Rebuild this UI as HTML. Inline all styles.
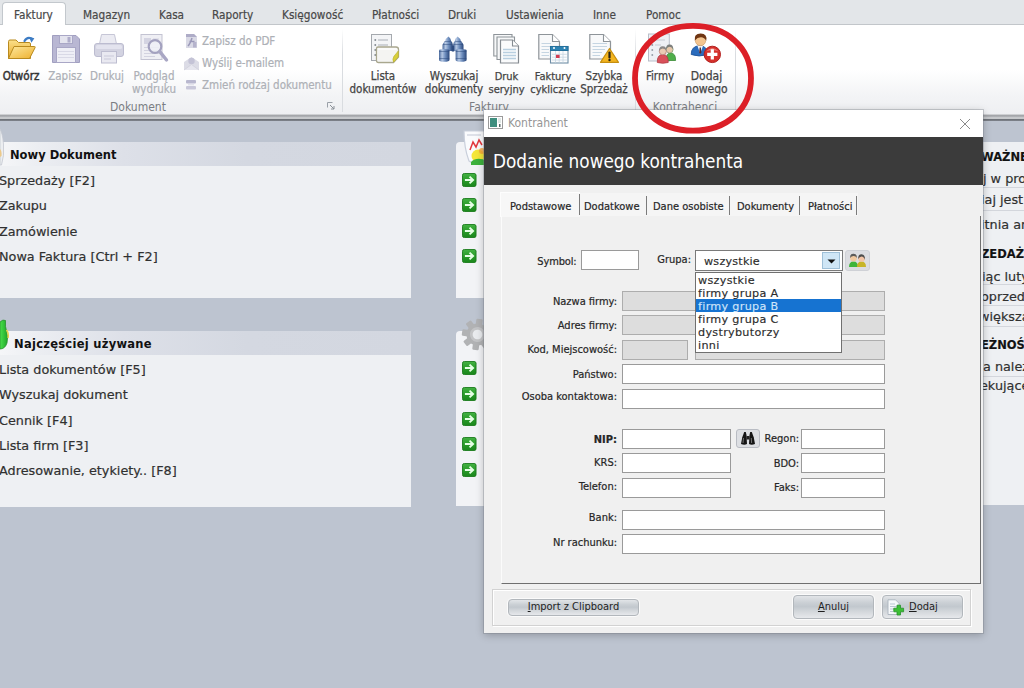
<!DOCTYPE html>
<html lang="pl">
<head>
<meta charset="utf-8">
<title>Kontrahent</title>
<style>
*{box-sizing:border-box;margin:0;padding:0}
html,body{width:1024px;height:688px;overflow:hidden}
body{position:relative;background:#bdc4d0;font-family:"DejaVu Sans","Liberation Sans",sans-serif;color:#222}
.abs{position:absolute}
/* ---------- ribbon ---------- */
#tabbar{position:absolute;left:0;top:0;width:1024px;height:25px;background:#e3e6e9;border-bottom:1px solid #c2c6ca}
.rtab{position:absolute;top:7.5px;font:11.7px/14px "DejaVu Sans Condensed","Liberation Sans",sans-serif;color:#484848;-webkit-text-stroke:.2px #484848;white-space:nowrap}
#acttab{position:absolute;left:2px;top:2px;width:64px;height:24px;background:#fff;border:1px solid #c3c8cd;border-bottom:none;border-radius:4px 4px 0 0}
#ribbon{position:absolute;left:0;top:25px;width:1024px;height:89px;background:linear-gradient(#fff 0,#fff 45px,#f3f4f6 70px,#eeeff2 89px)}
#ribline{position:absolute;left:0;top:114px;width:1024px;height:7px;background:linear-gradient(#e3e4e7 0,#a4a6aa 1.500px,#a4a6aa 2.300px,#c6c8cb 3px,#c6c8cb 4.800px,#6f737a 5.500px,#6f737a 6.400px,#b4bac6 7px)}
.gsep{position:absolute;top:29px;width:1px;height:83px;background:linear-gradient(#fff,#d9dce0 30%,#d9dce0)}
.glabel{position:absolute;top:99.500px;font:12px/14px "DejaVu Sans Condensed","Liberation Sans",sans-serif;color:#7a7d82;white-space:nowrap;text-align:center}
.blabel{position:absolute;font:11.5px/13px "DejaVu Sans Condensed","Liberation Sans",sans-serif;color:#444;-webkit-text-stroke:.25px #444;text-align:center;white-space:nowrap}
.blabel.dis{color:#adb0b6;-webkit-text-stroke:.2px #adb0b6}
.slabel{position:absolute;font:11.5px/13px "DejaVu Sans Condensed","Liberation Sans",sans-serif;color:#adb0b6;-webkit-text-stroke:.2px #adb0b6;white-space:nowrap}
/* ---------- panels ---------- */
.panel{position:absolute;background:#eef0f3}
.phead{position:absolute;left:0;top:0;right:0;height:24px;background:linear-gradient(90deg,#f5f6f8 0,#eceef2 9%,#dde0e8 30%,#d4d8e1 60%,#d3d7e0 100%)}
.ptitle{position:absolute;top:6px;font:bold 11.5px/14px "DejaVu Sans","Liberation Sans",sans-serif;color:#111;white-space:nowrap}
.pitem{position:absolute;left:-1px;font:12.8px/16px "DejaVu Sans","Liberation Sans",sans-serif;color:#303030;white-space:nowrap;-webkit-text-stroke:.2px #303030}
.garrow{position:absolute;left:462px;width:14.500px;height:14px}
/* ---------- dialog ---------- */
#dlg{position:absolute;left:484px;top:110px;width:499px;height:523px;background:#f0f0f0;box-shadow:0 0 0 1px rgba(120,125,135,.35),0 2px 8px rgba(0,0,0,.25)}
#dtitle{position:absolute;left:0;top:0;width:100%;height:27px;background:#fff}
#dhead{position:absolute;left:0;top:27px;width:100%;height:48px;background:#3b3b3b}
#dhead span{position:absolute;left:9px;top:13px;font:18.800px/24px "DejaVu Sans Condensed","Liberation Sans",sans-serif;color:#fff;white-space:nowrap}
.dl{position:absolute;font:11px/14px "DejaVu Sans Condensed","Liberation Sans",sans-serif;color:#262626;-webkit-text-stroke:.2px #262626;white-space:nowrap;text-align:right}
.inp{position:absolute;height:20px;background:#fff;border:1px solid #9a9a9a}
.inp.g{background:#dddddd;border-color:#adadad}
.btn{position:absolute;border:1px solid #b2b7bc;border-radius:4px;box-shadow:0 0 0 1px rgba(255,255,255,.7);background:linear-gradient(#e2e5e8 0,#cbd0d5 30%,#c2c8ce 48%,#d3d7db 70%,#e6e8eb 100%);font:11px/14px "DejaVu Sans Condensed","Liberation Sans",sans-serif;color:#1e1e1e;text-align:center}

.tb{font-size:11px}
.tsep{position:absolute;top:86px;width:1px;height:19px;background:#7b7b7b}
#ddl{position:absolute;left:211px;top:161.500px;width:147px;height:81px;background:#fff;border:1px solid #707070;font:11.2px/13px "DejaVu Sans","Liberation Sans",sans-serif;letter-spacing:.3px;color:#2c2c2c;-webkit-text-stroke:.15px #2c2c2c}
#ddl div{height:13px;line-height:15px;padding-left:2px;white-space:nowrap}
#ddl .sel{background:#1673d1;color:#cfe4fa;-webkit-text-stroke:.15px #cfe4fa}

.rt{position:absolute;font:12.800px/16px "DejaVu Sans","Liberation Sans",sans-serif;color:#303030;-webkit-text-stroke:.2px #303030;white-space:nowrap}
.rt.b{font-weight:bold;font-size:11.5px;color:#111}
.rl{position:absolute;left:0;width:60px;height:1px;background:#d3d6dc}
</style>
</head>
<body>

<!-- ======= RIBBON ======= -->
<div id="tabbar"></div>
<div id="acttab"></div>
<span class="rtab" style="left:14px">Faktury</span>
<span class="rtab" style="left:83px">Magazyn</span>
<span class="rtab" style="left:159px">Kasa</span>
<span class="rtab" style="left:212px">Raporty</span>
<span class="rtab" style="left:282px">Księgowość</span>
<span class="rtab" style="left:372px">Płatności</span>
<span class="rtab" style="left:448px">Druki</span>
<span class="rtab" style="left:506px">Ustawienia</span>
<span class="rtab" style="left:593px">Inne</span>
<span class="rtab" style="left:646px">Pomoc</span>
<div id="ribbon"></div>
<div id="ribline"></div>
<div class="gsep" style="left:342px"></div>
<div class="gsep" style="left:635px"></div>
<div class="gsep" style="left:735px"></div>

<span class="glabel" style="left:98px;width:80px">Dokument</span>
<span class="glabel" style="left:449px;width:80px">Faktury</span>
<span class="glabel" style="left:645px;width:80px">Kontrahenci</span>

<span class="blabel" style="left:-9px;width:60px;top:70px;color:#333;-webkit-text-stroke:.45px #333">Otwórz</span>
<span class="blabel dis" style="left:35px;width:60px;top:70px">Zapisz</span>
<span class="blabel dis" style="left:77px;width:60px;top:70px">Drukuj</span>
<span class="blabel dis" style="left:124px;width:60px;top:70px">Podgląd<br>wydruku</span>
<span class="slabel" style="left:202px;top:35px">Zapisz do PDF</span>
<span class="slabel" style="left:202px;top:57px">Wyślij e-mailem</span>
<span class="slabel" style="left:202px;top:79px">Zmień rodzaj dokumentu</span>

<span class="blabel" style="left:343px;width:80px;top:70px">Lista<br>dokumentów</span>
<span class="blabel" style="left:414px;width:80px;top:70px">Wyszukaj<br>dokumenty</span>
<span class="blabel" style="left:466.500px;width:80px;top:70px;font-size:11px">Druk<br>seryjny</span>
<span class="blabel" style="left:513px;width:80px;top:70px;font-size:11px">Faktury<br>cykliczne</span>
<span class="blabel" style="left:564px;width:80px;top:70px">Szybka<br>Sprzedaż</span>
<span class="blabel" style="left:620px;width:80px;top:70px">Firmy</span>
<span class="blabel" style="left:666.500px;width:80px;top:70px;font-size:12px">Dodaj<br>nowego</span>


<!-- ======= RIBBON ICONS ======= -->
<!-- open folder -->
<svg class="abs" style="left:6px;top:34px" width="32" height="28" viewBox="0 0 32 28">
  <defs><linearGradient id="fo1" x1="0" y1="0" x2="0" y2="1"><stop offset="0" stop-color="#fbe08a"/><stop offset="1" stop-color="#e9a92a"/></linearGradient>
  <linearGradient id="fo2" x1="0" y1="0" x2="1" y2="1"><stop offset="0" stop-color="#fde9a0"/><stop offset="1" stop-color="#eeb02c"/></linearGradient></defs>
  <path d="M2.5 7.5 Q2.5 6 4 6 H10 L12.5 8.5 H23 Q24.5 8.5 24.5 10 V24.5 H2.5 Z" fill="url(#fo1)" stroke="#b98a1e" stroke-width="1"/>
  <path d="M8 12.5 H28.5 Q29.6 12.5 29 13.8 L23.5 24.5 H2.5 Z" fill="url(#fo2)" stroke="#b98a1e" stroke-width="1"/>
  <path d="M18.5 7 Q21 2.5 25.5 4.5" fill="none" stroke="#3d7cc4" stroke-width="2.2" stroke-linecap="round"/>
  <path d="M23.2 3 L28.4 4.2 L25.4 8.8 Z" fill="#3d7cc4"/>
</svg>
<!-- floppy -->
<svg class="abs" style="left:51px;top:34px" width="30" height="30" viewBox="0 0 30 30">
  <path d="M1.5 1.5 H25 L28.5 5 V28.5 H1.5 Z" fill="#b9b7d3" stroke="#a19fc0"/>
  <rect x="8.5" y="1.5" width="13" height="8" fill="#e4e4ee" stroke="#a9a7c6"/>
  <rect x="16.5" y="3" width="3" height="5.5" fill="#aeacc9"/>
  <rect x="5.5" y="13.5" width="19" height="15" fill="#efeff6" stroke="#a9a7c6"/>
  <path d="M7 17.5 H23 M7 20.5 H23 M7 23.5 H23" stroke="#d9d9e6" stroke-width="1"/>
</svg>
<!-- printer -->
<svg class="abs" style="left:93px;top:32px" width="32" height="33" viewBox="0 0 32 33">
  <path d="M8.5 2.5 H21.5 L23.5 12 H6.5 Z" fill="#ebebf2" stroke="#c6c6d6"/>
  <rect x="1.5" y="11.5" width="29" height="13" rx="2.5" fill="#d3d3e1" stroke="#bcbcd0"/>
  <rect x="3" y="13" width="26" height="4" rx="1.5" fill="#e3e3ee"/>
  <rect x="8.5" y="19.5" width="15" height="11.5" fill="#e9e9f1" stroke="#bdbdd0"/>
  <path d="M11 24 H21 M11 27 H18" stroke="#c9c9da" stroke-width="1.2"/>
</svg>
<!-- preview -->
<svg class="abs" style="left:139px;top:32px" width="32" height="32" viewBox="0 0 32 32">
  <rect x="2" y="2.5" width="21" height="25" fill="#efeff4" stroke="#c3c3d2"/>
  <rect x="5" y="6" width="7" height="6" fill="#d4d4e2"/>
  <path d="M14 7 H20 M14 10 H20 M5 15.5 H20 M5 18.5 H20 M5 21.5 H20 M5 24.5 H16" stroke="#d3d3e0" stroke-width="1.2"/>
  <circle cx="16" cy="14.5" r="6.3" fill="#eef0f6" fill-opacity=".85" stroke="#a3a1bf" stroke-width="2.2"/>
  <path d="M20.8 19.6 L27.5 28" stroke="#a9a7c4" stroke-width="3.4" stroke-linecap="round"/>
</svg>
<!-- small icons -->
<svg class="abs" style="left:185px;top:33px" width="13" height="16" viewBox="0 0 13 16">
  <path d="M1 1 H9 L12 4 V15 H1 Z" fill="#d9d9e5"/><path d="M1 1 H9 L12 4 H1 Z" fill="#aeacc7"/>
  <path d="M3 13 C5 11 6 8 7 5 M4.5 8.5 H9.5" stroke="#9a98b8" stroke-width="1.5" fill="none"/>
  <rect x="8" y="9" width="3.5" height="5.5" fill="#b5b3cc"/>
</svg>
<svg class="abs" style="left:183px;top:56px" width="17" height="15" viewBox="0 0 17 15">
  <path d="M1 6 L8.5 1 L16 6 V14 H1 Z" fill="#dcdce6"/>
  <circle cx="8.5" cy="5" r="3.2" fill="#c4c3d6"/>
  <path d="M1 14 L8.5 8.5 L16 14" fill="#e6e6ee" stroke="#d0d0dc" stroke-width=".8"/>
</svg>
<svg class="abs" style="left:185px;top:79px" width="12" height="12" viewBox="0 0 12 12">
  <rect x="1" y="1" width="10" height="3.6" rx="1" fill="#b9b8cf"/>
  <rect x="1" y="7" width="10" height="3.6" rx="1" fill="#c9c8da"/>
  <path d="M3 5.8 H9" stroke="#dadae6" stroke-width="1"/>
</svg>

<!-- lista dokumentow -->
<svg class="abs" style="left:369px;top:32px" width="32" height="33" viewBox="0 0 32 33">
  <rect x="2.5" y="2.5" width="20" height="26" fill="#f4f5f7" stroke="#a5a9ae"/>
  <path d="M9 8 H19 M9 13 H19 M9 18 H12" stroke="#aab0b8" stroke-width="1.2"/>
  <path d="M5.5 8 h1.6 M5.5 13 h1.6 M5.5 18 h1.6 M5.5 23 h1.6" stroke="#6e757d" stroke-width="1.6"/>
  <path d="M7.5 16.5 Q7.5 15 9 15 H27 Q29.5 15 29.5 17.5 V25 L24.5 30.5 H9.5 Q7.5 30.5 7.5 28.5 Z" fill="#fbfbfa" stroke="#a9a78e" stroke-width="1.3"/>
  <path d="M9 18 H28 V24.5 L24 29 H9 Z" fill="#f4f4f2"/>
  <path d="M29.3 19 V25 L24.6 30.2 Q23 27 25 24.2 Z" fill="#d8cf3a" stroke="#b7ae28" stroke-width=".6"/>
</svg>
<!-- binoculars -->
<svg class="abs" style="left:438px;top:34px" width="30" height="29" viewBox="0 0 30 29">
  <defs><linearGradient id="bn" x1="0" y1="0" x2="1" y2="0"><stop offset="0" stop-color="#48689b"/><stop offset=".3" stop-color="#b4c7e3"/><stop offset=".6" stop-color="#6d8dbd"/><stop offset="1" stop-color="#294679"/></linearGradient></defs>
  <path d="M10.500 2.500 Q12.800 4 13.200 7 Q14.800 8.500 14.800 11 V17 H4.500 V11 Q5 8.500 7 7.500 Q7.800 4 10.500 2.500Z" fill="url(#bn)"/>
  <path d="M19.500 2.500 Q17.200 4 16.800 7 Q15.200 8.500 15.200 11 V17 H25.500 V11 Q25 8.500 23 7.500 Q22.200 4 19.500 2.500Z" fill="url(#bn)"/>
  <rect x="13.800" y="11.500" width="2.400" height="6" fill="#2f4d80"/>
  <path d="M1 16.500 Q1 15 6.200 15 Q11.500 15 11.500 16.500 V26 Q11.500 27.800 6.200 27.800 Q1 27.800 1 26 Z" fill="url(#bn)"/>
  <path d="M17.600 16.500 Q17.600 15 23 15 Q28.600 15 28.600 16.500 V26 Q28.600 27.800 23 27.800 Q17.600 27.800 17.600 26 Z" fill="url(#bn)"/>
  <path d="M6.300 7.500 H12.700 M17.300 7.500 H23.700 M4.800 10.500 H14.600 M15.400 10.500 H25.200 M1.200 17.500 H11.300 M17.800 17.500 H28.400 M1.200 24.500 H11.300 M17.800 24.500 H28.400" stroke="#2b4a7c" stroke-width=".9" opacity=".55"/>
</svg>
<!-- druk seryjny -->
<svg class="abs" style="left:492px;top:32px" width="30" height="33" viewBox="0 0 30 33">
  <path d="M1.800 2.500 H20 V24 H1.800 Z" fill="#f7f8f9" stroke="#8e9499" stroke-width="1.100"/>
  <path d="M5 5 H22.500 V27.500 H5 Z" fill="#f7f8f9" stroke="#8e9499" stroke-width="1.100"/>
  <path d="M8.500 8 H20.500 L26.500 14 V31 H8.500 Z" fill="#fafbfc" stroke="#868c92" stroke-width="1.200"/>
  <path d="M20.500 8 V14 H26.500" fill="#fff" stroke="#868c92" stroke-width="1.100"/>
  <path d="M11 17.500 H24 M11 20.500 H24 M11 23.500 H24 M11 26.500 H24" stroke="#b8cfe0" stroke-width="1.300"/>
</svg>
<!-- faktury cykliczne -->
<svg class="abs" style="left:537px;top:32px" width="33" height="33" viewBox="0 0 33 33">
  <path d="M1.800 2.500 H15.500 L22.500 9.500 V27 H1.800 Z" fill="#f8f9fa" stroke="#8e9499" stroke-width="1.200"/>
  <path d="M15.500 2.500 V9.500 H22.500" fill="#fff" stroke="#8e9499" stroke-width="1.100"/>
  <path d="M4.500 11.500 H14 M4.500 14.500 H14 M4.500 17.500 H12 M4.500 20.500 H12 M4.500 23.500 H12" stroke="#c5d5e2" stroke-width="1.200"/>
  <rect x="13.500" y="14.500" width="17.500" height="16.500" fill="#fbfcfd" stroke="#6f8ea6" stroke-width="1.100"/>
  <rect x="13.500" y="14.500" width="17.500" height="4" fill="#2c82b2" stroke="#23709c" stroke-width="1"/>
  <circle cx="17" cy="16" r="1" fill="#fff"/><circle cx="27.500" cy="16" r="1" fill="#fff"/>
  <path d="M15 22.300 H29.800 M15 25.200 H29.800 M15 28 H29.800 M18.500 19 V30.500 M22.200 19 V30.500 M26 19 V30.500" stroke="#c6d6e2" stroke-width=".8"/>
  <rect x="19" y="22.800" width="3.600" height="3.200" fill="#d23b50"/>
</svg>
<!-- szybka sprzedaz -->
<svg class="abs" style="left:588px;top:32px" width="33" height="33" viewBox="0 0 33 33">
  <path d="M1.800 2.500 H15.500 L22.500 9.500 V27 H1.800 Z" fill="#f8f9fa" stroke="#8e9499" stroke-width="1.200"/>
  <path d="M15.500 2.500 V9.500 H22.500" fill="#fff" stroke="#8e9499" stroke-width="1.100"/>
  <path d="M4.500 11.500 H19 M4.500 14.500 H19 M4.500 17.500 H17 M4.500 20.500 H14 M4.500 23.500 H12" stroke="#c5d5e2" stroke-width="1.200"/>
  <path d="M21.500 16.500 L30.500 30.300 H12.500 Z" fill="#f4b51f" stroke="#c68f10" stroke-width="1.200" stroke-linejoin="round"/>
  <path d="M21.500 20.500 V25.500" stroke="#2b2414" stroke-width="2.200" stroke-linecap="round"/>
  <circle cx="21.500" cy="28" r="1.200" fill="#2b2414"/>
</svg>
<!-- firmy -->
<svg class="abs" style="left:647px;top:32px" width="33" height="33" viewBox="0 0 33 33">
  <rect x="1.500" y="2" width="20.800" height="27" fill="#eef0f5" stroke="#b9bec9"/>
  <path d="M8 8 H18 M8 13 H14" stroke="#c3c9d3" stroke-width="1.200"/>
  <path d="M4.500 8 h1.600 M4.500 13 h1.600 M4.500 18 h1.600 M4.500 23 h1.600" stroke="#858d99" stroke-width="1.500"/>
  <path d="M19.300 28.500 Q19 21 23.500 21 Q28.800 21 28.600 28.500 Z" fill="#4fae4a" stroke="#3a8a36" stroke-width=".8"/>
  <circle cx="22.600" cy="17.500" r="3.500" fill="#e6c7ab" stroke="#7d9a6c" stroke-width=".7"/>
  <path d="M19 17.300 Q19 12.300 22.600 12.500 Q26.400 12.500 26.200 17.300 Q25 14.800 22.600 14.800 Q20.200 14.800 19 17.300Z" fill="#7d7f7d"/>
  <path d="M10.300 30.500 Q10 22.500 15.800 22.500 Q21.500 22.500 21.200 30.500 Q15.800 32 10.300 30.500Z" fill="#d9515a" stroke="#b23a44" stroke-width=".8"/>
  <circle cx="15.800" cy="19.200" r="3.600" fill="#eaccb4" stroke="#b47a74" stroke-width=".7"/>
  <path d="M12 19 Q12 14 15.800 14.200 Q19.600 14.200 19.500 19 Q18.300 16.500 15.800 16.500 Q13.200 16.500 12 19Z" fill="#8a8888"/>
</svg>
<!-- dodaj nowego -->
<svg class="abs" style="left:689px;top:32px" width="34" height="33" viewBox="0 0 34 33">
  <path d="M2.200 22.500 Q2.200 13.800 10.800 13.800 Q18.500 13.800 18.500 22.500 Q10 25.500 2.200 22.500 Z" fill="#2a6cbd" stroke="#1c5196" stroke-width=".8"/>
  <path d="M8.500 14 L11.200 21.500 L14 14 Z" fill="#f4f6fa"/>
  <path d="M10.600 15.500 H11.900 L12.300 20.500 L11.200 22 L10.200 20.500 Z" fill="#5a2a2e"/>
  <circle cx="11.500" cy="8.500" r="5.200" fill="#f3c48f" stroke="#c9975f" stroke-width=".6"/>
  <path d="M5.800 8.500 Q4.800 1.500 11.800 1.600 Q18.600 1.800 17.200 8.800 Q15.500 5.500 12 5.300 Q8.500 5.200 5.800 8.500 Z" fill="#6f3512"/>
  <circle cx="23.300" cy="22.400" r="8.200" fill="#d5302b" stroke="#b3201f" stroke-width="1"/>
  <path d="M16.800 19.500 Q23.300 12.500 29.800 19.500 Q23.300 16.800 16.800 19.500Z" fill="#ee8a83" opacity=".75"/>
  <path d="M23.300 17.300 V27.500 M18.200 22.400 H28.400" stroke="#fff" stroke-width="3.200"/>
</svg>
<!-- group expander glyph -->
<svg class="abs" style="left:327px;top:102px" width="8" height="8" viewBox="0 0 8 8"><path d="M.5 5.500 V.5 H5.500" fill="none" stroke="#9aa0a8"/><path d="M3 3 L7 7 M7 4 V7 H4" fill="none" stroke="#8a9098"/></svg>

<!-- ======= LEFT PANELS ======= -->
<div class="panel" style="left:0;top:142px;width:411px;height:156px">
  <div class="phead"></div>
  <span class="ptitle" style="left:10px">Nowy Dokument</span>
  <span class="pitem" style="top:31px">Sprzedaży [F2]</span>
  <span class="pitem" style="top:56px">Zakupu</span>
  <span class="pitem" style="top:82px">Zamówienie</span>
  <span class="pitem" style="top:107px">Nowa Faktura [Ctrl + F2]</span>
</div>
<div class="panel" style="left:0;top:331px;width:411px;height:176px">
  <div class="phead"></div>
  <span class="ptitle" style="left:14px;letter-spacing:.27px">Najczęściej używane</span>
  <span class="pitem" style="top:31px">Lista dokumentów [F5]</span>
  <span class="pitem" style="top:56px">Wyszukaj dokument</span>
  <span class="pitem" style="top:81.500px">Cennik [F4]</span>
  <span class="pitem" style="top:107px">Lista firm [F3]</span>
  <span class="pitem" style="top:132px">Adresowanie, etykiety.. [F8]</span>
</div>


<!-- ======= MIDDLE PANELS (mostly hidden) ======= -->
<div class="panel" style="left:456px;top:142px;width:60px;height:156px;border-radius:4px 0 0 0;background:#f2f3f6"></div>
<div class="panel" style="left:456px;top:331px;width:60px;height:175px;border-radius:4px 0 0 0;background:#f2f3f6"></div>
<svg class="abs" style="left:461px;top:128px" width="26" height="38" viewBox="0 0 26 38">
  <path d="M3 3 H24 V30 Q14 38 8 33 Q3 20 3 3Z" fill="#fafbfd" stroke="#c9cfdb" stroke-width="1.200"/>
  <path d="M6 7 H20" stroke="#d5d9e2" stroke-width="1.500"/>
  <path d="M9 22 L12 14 L15 19 L18 12 L21 17" fill="none" stroke="#e2383e" stroke-width="1.500"/>
  <circle cx="17" cy="28" r="6.500" fill="#f4e63a"/>
  <path d="M10 34 Q16 28 26 33 V37 H10 Z" fill="#3db13c"/>
  <circle cx="21" cy="23" r="3" fill="#f7a23a" opacity=".8"/>
</svg>
<svg class="abs" style="left:461.200px;top:318.400px" width="33" height="33" viewBox="0 0 36 36">
  <g transform="translate(18 18) rotate(8)" fill="#b1b2b4">
    <circle r="12"/>
    <g id="gt"><rect x="-3.500" y="-17" width="7" height="8" rx="1.200"/></g>
    <use href="#gt" transform="rotate(45)"/><use href="#gt" transform="rotate(90)"/><use href="#gt" transform="rotate(135)"/>
    <use href="#gt" transform="rotate(180)"/><use href="#gt" transform="rotate(225)"/><use href="#gt" transform="rotate(270)"/><use href="#gt" transform="rotate(315)"/>
    <circle r="8.300" fill="#c3c4c6"/>
    <circle r="5.300" fill="#e9ebee"/>
  </g>
</svg>
<svg class="garrow" style="top:173px" viewBox="0 0 15 15" preserveAspectRatio="none"><defs><linearGradient id="ga0" x1="0" y1="0" x2="0" y2="1"><stop offset="0" stop-color="#44b244"/><stop offset=".5" stop-color="#2a9c2a"/><stop offset="1" stop-color="#1a861c"/></linearGradient></defs><rect x=".5" y=".5" width="14" height="14" rx="2" fill="url(#ga0)" stroke="#1e7d20"/><path d="M3 7.500 H11 M7.800 3.800 L11.500 7.500 L7.800 11.200" fill="none" stroke="#e6ffe6" stroke-width="2" stroke-linejoin="miter"/></svg>
<svg class="garrow" style="top:198px" viewBox="0 0 15 15" preserveAspectRatio="none"><defs><linearGradient id="ga1" x1="0" y1="0" x2="0" y2="1"><stop offset="0" stop-color="#44b244"/><stop offset=".5" stop-color="#2a9c2a"/><stop offset="1" stop-color="#1a861c"/></linearGradient></defs><rect x=".5" y=".5" width="14" height="14" rx="2" fill="url(#ga1)" stroke="#1e7d20"/><path d="M3 7.500 H11 M7.800 3.800 L11.500 7.500 L7.800 11.200" fill="none" stroke="#e6ffe6" stroke-width="2" stroke-linejoin="miter"/></svg>
<svg class="garrow" style="top:224px" viewBox="0 0 15 15" preserveAspectRatio="none"><defs><linearGradient id="ga2" x1="0" y1="0" x2="0" y2="1"><stop offset="0" stop-color="#44b244"/><stop offset=".5" stop-color="#2a9c2a"/><stop offset="1" stop-color="#1a861c"/></linearGradient></defs><rect x=".5" y=".5" width="14" height="14" rx="2" fill="url(#ga2)" stroke="#1e7d20"/><path d="M3 7.500 H11 M7.800 3.800 L11.500 7.500 L7.800 11.200" fill="none" stroke="#e6ffe6" stroke-width="2" stroke-linejoin="miter"/></svg>
<svg class="garrow" style="top:249px" viewBox="0 0 15 15" preserveAspectRatio="none"><defs><linearGradient id="ga3" x1="0" y1="0" x2="0" y2="1"><stop offset="0" stop-color="#44b244"/><stop offset=".5" stop-color="#2a9c2a"/><stop offset="1" stop-color="#1a861c"/></linearGradient></defs><rect x=".5" y=".5" width="14" height="14" rx="2" fill="url(#ga3)" stroke="#1e7d20"/><path d="M3 7.500 H11 M7.800 3.800 L11.500 7.500 L7.800 11.200" fill="none" stroke="#e6ffe6" stroke-width="2" stroke-linejoin="miter"/></svg>
<svg class="garrow" style="top:361px" viewBox="0 0 15 15" preserveAspectRatio="none"><defs><linearGradient id="ga4" x1="0" y1="0" x2="0" y2="1"><stop offset="0" stop-color="#44b244"/><stop offset=".5" stop-color="#2a9c2a"/><stop offset="1" stop-color="#1a861c"/></linearGradient></defs><rect x=".5" y=".5" width="14" height="14" rx="2" fill="url(#ga4)" stroke="#1e7d20"/><path d="M3 7.500 H11 M7.800 3.800 L11.500 7.500 L7.800 11.200" fill="none" stroke="#e6ffe6" stroke-width="2" stroke-linejoin="miter"/></svg>
<svg class="garrow" style="top:387px" viewBox="0 0 15 15" preserveAspectRatio="none"><defs><linearGradient id="ga5" x1="0" y1="0" x2="0" y2="1"><stop offset="0" stop-color="#44b244"/><stop offset=".5" stop-color="#2a9c2a"/><stop offset="1" stop-color="#1a861c"/></linearGradient></defs><rect x=".5" y=".5" width="14" height="14" rx="2" fill="url(#ga5)" stroke="#1e7d20"/><path d="M3 7.500 H11 M7.800 3.800 L11.500 7.500 L7.800 11.200" fill="none" stroke="#e6ffe6" stroke-width="2" stroke-linejoin="miter"/></svg>
<svg class="garrow" style="top:412px" viewBox="0 0 15 15" preserveAspectRatio="none"><defs><linearGradient id="ga6" x1="0" y1="0" x2="0" y2="1"><stop offset="0" stop-color="#44b244"/><stop offset=".5" stop-color="#2a9c2a"/><stop offset="1" stop-color="#1a861c"/></linearGradient></defs><rect x=".5" y=".5" width="14" height="14" rx="2" fill="url(#ga6)" stroke="#1e7d20"/><path d="M3 7.500 H11 M7.800 3.800 L11.500 7.500 L7.800 11.200" fill="none" stroke="#e6ffe6" stroke-width="2" stroke-linejoin="miter"/></svg>
<svg class="garrow" style="top:437px" viewBox="0 0 15 15" preserveAspectRatio="none"><defs><linearGradient id="ga7" x1="0" y1="0" x2="0" y2="1"><stop offset="0" stop-color="#44b244"/><stop offset=".5" stop-color="#2a9c2a"/><stop offset="1" stop-color="#1a861c"/></linearGradient></defs><rect x=".5" y=".5" width="14" height="14" rx="2" fill="url(#ga7)" stroke="#1e7d20"/><path d="M3 7.500 H11 M7.800 3.800 L11.500 7.500 L7.800 11.200" fill="none" stroke="#e6ffe6" stroke-width="2" stroke-linejoin="miter"/></svg>
<svg class="garrow" style="top:463px" viewBox="0 0 15 15" preserveAspectRatio="none"><defs><linearGradient id="ga8" x1="0" y1="0" x2="0" y2="1"><stop offset="0" stop-color="#44b244"/><stop offset=".5" stop-color="#2a9c2a"/><stop offset="1" stop-color="#1a861c"/></linearGradient></defs><rect x=".5" y=".5" width="14" height="14" rx="2" fill="url(#ga8)" stroke="#1e7d20"/><path d="M3 7.500 H11 M7.800 3.800 L11.500 7.500 L7.800 11.200" fill="none" stroke="#e6ffe6" stroke-width="2" stroke-linejoin="miter"/></svg>

<!-- left panel header icons (cropped at the window edge) -->
<svg class="abs" style="left:0;top:124px" width="8" height="44" viewBox="0 0 8 44"><path d="M0 5 Q2.500 9 3.500 20 Q4.500 32 1.500 41 H0 Z" fill="#eceef1" stroke="#c4c8d0" stroke-width=".8"/><path d="M0 25 Q2 27 1.500 32 L0 33Z" fill="#ecc98a"/></svg>
<svg class="abs" style="left:0;top:319px" width="10" height="32" viewBox="0 0 10 32"><defs><linearGradient id="gf" x1="0" y1="0" x2="1" y2="0"><stop offset="0" stop-color="#49e04b"/><stop offset="1" stop-color="#1fa528"/></linearGradient></defs><path d="M0 3 Q3 0 5.500 1.500 Q5 8 6.500 12 Q8.500 18 7 24 Q5 30 0 30 Z" fill="url(#gf)" stroke="#2a8f2e" stroke-width=".8"/><path d="M6.500 11 Q9 14 8 19" stroke="#e9d34a" stroke-width="1.500" fill="none"/></svg>

<!-- ======= RIGHT PANEL ======= -->
<div class="panel" style="left:982px;top:142px;width:42px;height:363px;overflow:hidden">
  <span class="rt b" style="top:7px;left:-1px">WAŻNE</span>
  <span class="rt" style="top:29px;left:1px">j w programie</span>
  <i class="rl" style="top:45px"></i>
  <span class="rt" style="top:50px;left:-1px">iaj jest</span>
  <i class="rl" style="top:68px"></i>
  <span class="rt" style="top:75px;left:-1px">itnia analiza</span>
  <span class="rt b" style="top:104px;left:-1px">ZEDAŻ</span>
  <span class="rt" style="top:127px;left:0px">iąc luty</span>
  <i class="rl" style="top:142px"></i>
  <span class="rt" style="top:147px;left:-1px">oprzedni</span>
  <i class="rl" style="top:163px"></i>
  <span class="rt" style="top:167px;left:-3px">większa</span>
  <i class="rl" style="top:184px"></i>
  <span class="rt b" style="top:195px;left:-1px">EŻNOŚCI</span>
  <span class="rt" style="top:217px;left:1px">a należności</span>
  <i class="rl" style="top:234px"></i>
  <span class="rt" style="top:236px;left:-2px">ekujące</span>
</div>
<!-- ======= DIALOG ======= -->
<div id="dlg">
  <div id="dtitle">
    <svg class="abs" style="left:4px;top:6px" width="15" height="13" viewBox="0 0 15 13"><rect x="0.5" y="0.5" width="14" height="12" fill="#fff" stroke="#9a9a9a"/><rect x="2" y="2" width="7" height="9" fill="#3f8f7f"/><rect x="10" y="2" width="3" height="5" fill="#dfe7e5"/><rect x="11" y="8" width="1.5" height="3" fill="#5a6a68"/></svg>
    <span class="abs" style="left:24px;top:6px;font:12px/15px 'DejaVu Sans Condensed','Liberation Sans',sans-serif;color:#969696">Kontrahent</span>
    <svg class="abs" style="left:475px;top:8px" width="12" height="12" viewBox="0 0 12 12"><path d="M1 1 L11 11 M11 1 L1 11" stroke="#8a8a8a" stroke-width="1" fill="none"/></svg>
  </div>
  <div id="dhead"><span>Dodanie nowego kontrahenta</span></div>

  <!-- tab strip -->
  <div class="abs" style="left:16px;top:83px;width:358px;height:23px;background:#f5f5f5"></div>
  <div class="abs" style="left:16px;top:82px;width:80px;height:25px;background:#f7f7f7;border-top:1px solid #fdfdfd;border-left:1px solid #fdfdfd"></div>
  <span class="dl tb" style="left:26px;top:90px">Podstawowe</span>
  <span class="dl tb" style="left:100px;top:90px">Dodatkowe</span>
  <span class="dl tb" style="left:169px;top:90px">Dane osobiste</span>
  <span class="dl tb" style="left:253px;top:90px">Dokumenty</span>
  <span class="dl tb" style="left:324px;top:90px">Płatności</span>
  <div class="tsep" style="left:95px;top:84px;height:21px"></div>
  <div class="tsep" style="left:162px"></div>
  <div class="tsep" style="left:245px"></div>
  <div class="tsep" style="left:315px"></div>
  <div class="tsep" style="left:372px"></div>
  <!-- tab page -->
  <div class="abs" style="left:17px;top:106px;width:480px;height:368px;border-left:1px solid #fbfbfb;border-right:1px solid #6f6f6f;border-bottom:1px solid #6f6f6f"></div>

  <!-- row: Symbol / Grupa -->
  <span class="dl" style="left:0;width:92.500px;top:145px;letter-spacing:-.15px">Symbol:</span>
  <div class="inp" style="left:97px;top:140px;width:58px"></div>
  <span class="dl" style="left:150px;width:57px;top:143px">Grupa:</span>
  <div class="inp" style="left:211px;top:140px;width:148px;height:21px;border-color:#7a7a7a"></div>
  <span class="abs" style="left:220px;top:145px;font:11.2px/14px 'DejaVu Sans','Liberation Sans',sans-serif;letter-spacing:.2px;color:#2c2c2c;-webkit-text-stroke:.15px #2c2c2c">wszystkie</span>
  <div class="abs" style="left:338px;top:142px;width:18px;height:17px;background:#cfe6f6;border:1px solid #9fc0d8"></div>
  <svg class="abs" style="left:343px;top:149px" width="9" height="5" viewBox="0 0 9 5"><path d="M0.5 0.5 H8.5 L4.5 4.5 Z" fill="#111"/></svg>
  <div class="abs" style="left:361px;top:140px;width:25px;height:21px;background:#dcdde1;border:1px solid #cfd1d6;border-radius:3px"></div>
  <svg class="abs" style="left:364px;top:142px" width="19" height="17" viewBox="0 0 19 17">
    <path d="M1 15 Q1 9.500 5.500 9.500 Q10 9.500 10 15 Z" fill="#3fb53a"/><circle cx="5.500" cy="6" r="3.400" fill="#f1c9a0"/><path d="M2 6 Q2 1.500 5.500 1.800 Q9 1.800 9 6 Q7.500 3.800 5.500 4 Q3.500 4 2 6Z" fill="#5b5b5b"/>
    <path d="M9 15 Q9 9.500 13.500 9.500 Q18 9.500 18 15 Z" fill="#c7b528"/><circle cx="13.500" cy="6.500" r="3.300" fill="#f3c4a6"/><path d="M10.200 7 Q10 2 13.500 2.300 Q17.200 2.300 17 8 Q16 4.500 13.500 4.500 Q11.500 4.500 10.200 7Z" fill="#4d4d4d"/>
  </svg>

  <!-- grey rows -->
  <span class="dl" style="left:0;width:133px;top:185px">Nazwa firmy:</span>
  <div class="inp g" style="left:138px;top:181px;width:263px"></div>
  <span class="dl" style="left:0;width:133px;top:209px">Adres firmy:</span>
  <div class="inp g" style="left:138px;top:205px;width:263px"></div>
  <span class="dl" style="left:0;width:133px;top:233px">Kod, Miejscowość:</span>
  <div class="inp g" style="left:138px;top:230px;width:66px"></div>
  <div class="inp g" style="left:211px;top:230px;width:190px"></div>
  <span class="dl" style="left:0;width:133px;top:258px">Państwo:</span>
  <div class="inp" style="left:138px;top:254px;width:263px"></div>
  <span class="dl" style="left:0;width:133px;top:280px">Osoba kontaktowa:</span>
  <div class="inp" style="left:138px;top:279px;width:263px"></div>

  <span class="dl" style="left:0;width:133px;top:323px;font-weight:bold">NIP:</span>
  <div class="inp" style="left:138px;top:319px;width:109px"></div>
  <div class="abs" style="left:252px;top:319px;width:24px;height:19px;background:#dddfe3;border:1px solid #b9bcc3;border-radius:3px"></div>
  <svg class="abs" style="left:256px;top:321px" width="16" height="15" viewBox="0 0 16 15">
    <path d="M4.200 1 L5.800 1 L6.500 4 L7 13 Q4.500 14.500 1 13 L2.200 6.500 Z" fill="#151515"/>
    <path d="M11.800 1 L10.200 1 L9.500 4 L9 13 Q11.500 14.500 15 13 L13.800 6.500 Z" fill="#151515"/>
    <rect x="6.500" y="5" width="3" height="3.500" fill="#222"/>
    <path d="M3.500 7 L3 12" stroke="#8a8a8a" stroke-width=".8"/><path d="M11.300 7 L11.600 12" stroke="#8a8a8a" stroke-width=".8"/>
  </svg>
  <span class="dl" style="left:260px;width:55px;top:322px">Regon:</span>
  <div class="inp" style="left:317px;top:319px;width:84px"></div>

  <span class="dl" style="left:0;width:133px;top:346px">KRS:</span>
  <div class="inp" style="left:138px;top:343px;width:109px"></div>
  <span class="dl" style="left:260px;width:55px;top:347px">BDO:</span>
  <div class="inp" style="left:317px;top:343px;width:84px"></div>

  <span class="dl" style="left:0;width:133px;top:370px">Telefon:</span>
  <div class="inp" style="left:138px;top:368px;width:109px"></div>
  <span class="dl" style="left:260px;width:55px;top:370.500px">Faks:</span>
  <div class="inp" style="left:317px;top:368px;width:84px"></div>

  <span class="dl" style="left:0;width:133px;top:401px">Bank:</span>
  <div class="inp" style="left:138px;top:400px;width:263px"></div>
  <span class="dl" style="left:0;width:133px;top:426px">Nr rachunku:</span>
  <div class="inp" style="left:138px;top:424px;width:263px"></div>

  <!-- dropdown list -->
  <div id="ddl">
    <div>wszystkie</div><div>firmy grupa A</div><div class="sel">firmy grupa B</div><div>firmy grupa C</div><div>dystrybutorzy</div><div>inni</div>
  </div>

  <!-- button bar -->
  <div class="abs" style="left:8px;top:479px;width:479px;height:37px;border:1px solid #d2d2d2;box-shadow:inset 1px 1px 0 #fff,1px 1px 0 #fff"></div>
  <div class="btn" style="left:24px;top:489px;width:131px;height:17px;line-height:14px"><u>I</u>mport z Clipboard</div>
  <div class="btn" style="left:309px;top:485px;width:81px;height:24px;line-height:21px"><u>A</u>nuluj</div>
  <div class="btn" style="left:398px;top:485px;width:81px;height:24px;line-height:21px;padding-left:26px;text-align:left"><u>D</u>odaj</div>
  <svg class="abs" style="left:403px;top:489px" width="18" height="17" viewBox="0 0 18 17">
    <path d="M1 .800 H8.500 L12 4.300 V15.500 H1 Z" fill="#f6f8fa" stroke="#a9b3bd" stroke-width=".9"/>
    <path d="M3 5 H8 M3 7.500 H9.500 M3 10 H7 M3 12.500 H6" stroke="#b9c6d2" stroke-width="1"/>
    <path d="M10 6.200 H13.500 V9.200 H16.600 V12.800 H13.500 V16 H10 V12.800 H6.800 V9.200 H10 Z" fill="#3cbf35" stroke="#24912a" stroke-width=".8"/>
  </svg>
</div>


<!-- ======= RED ANNOTATION ======= -->
<svg class="abs" style="left:620px;top:14px;z-index:50" width="150" height="130" viewBox="0 0 150 130"><path d="M15 64.3 C15 33.6 39.1 11.9 73 11.9 C106.9 11.9 131 33.6 131 64.3 C131 95 106.9 116.7 73 116.7 C39.1 116.7 15 95 15 64.3Z" fill="none" stroke="#dc1f27" stroke-width="5.800"/></svg>
</body>
</html>
